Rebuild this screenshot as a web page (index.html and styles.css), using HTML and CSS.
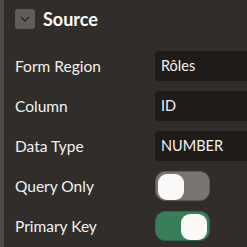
FILE: index.html
```html
<!DOCTYPE html>
<html lang="en">
<head>
    <meta charset="UTF-8">
    <title>Source</title>
    <link rel="stylesheet" href="styles.css">
</head>
<body>
    <div class="panel">
        <div class="group-head">
            <span class="chevron">
                <svg width="12" height="8" viewBox="0 0 12 8"><path d="M2 2 L6 6 L10 2" fill="none" stroke="#2a2623" stroke-width="1.3"/></svg>
            </span>
            <h2>Source</h2>
        </div>
        <div class="prop">
            <label>Form Region</label>
            <div class="field">Rôles</div>
        </div>
        <div class="prop">
            <label>Column</label>
            <div class="field">ID</div>
        </div>
        <div class="prop">
            <label>Data Type</label>
            <div class="field">NUMBER</div>
        </div>
        <div class="prop">
            <label>Query Only</label>
            <div class="switch"><span class="knob"></span></div>
        </div>
        <div class="prop">
            <label>Primary Key</label>
            <div class="switch on"><span class="knob"></span></div>
        </div>
    </div>
</body>
</html>
```

FILE: styles.css
```css
html, body {
    margin: 0;
    height: 100%;
}
body {
    background: #312d2a;
    font-family: Lato, "Open Sans", sans-serif;
    color: #f3f1ef;
    border-left: 4px solid #4f4a45;
    box-sizing: border-box;
    overflow: hidden;
}
.panel {
    padding: 9px 0 0 11px;
}
.group-head {
    display: flex;
    align-items: center;
    gap: 8px;
    height: 20px;
    margin-bottom: 22px;
}
.chevron {
    width: 20px;
    height: 20px;
    background: #615c57;
    border-radius: 3px;
    display: flex;
    align-items: center;
    justify-content: center;
}
.group-head h2 {
    margin: 0;
    font-size: 18px;
    font-weight: bold;
    color: #ffffff;
}
.prop {
    display: flex;
    align-items: center;
    height: 30px;
    margin-bottom: 10px;
}
.prop label {
    width: 140px;
    font-size: 15.5px;
}
.field {
    flex: 1;
    height: 30px;
    background: #1e1b19;
    border-radius: 4px 0 0 4px;
    font-size: 14.5px;
    line-height: 30px;
    padding-left: 6px;
}
.switch {
    width: 55px;
    height: 30px;
    box-sizing: border-box;
    background: #7a7571;
    border: 1px solid #5e5955;
    border-radius: 10px;
    padding: 2px;
    display: flex;
}
.switch.on {
    background: #3a7d5b;
    border-color: #2f6a4c;
    justify-content: flex-end;
}
.knob {
    width: 26px;
    height: 26px;
    background: #fcfaf9;
    border-radius: 9px;
}
```
